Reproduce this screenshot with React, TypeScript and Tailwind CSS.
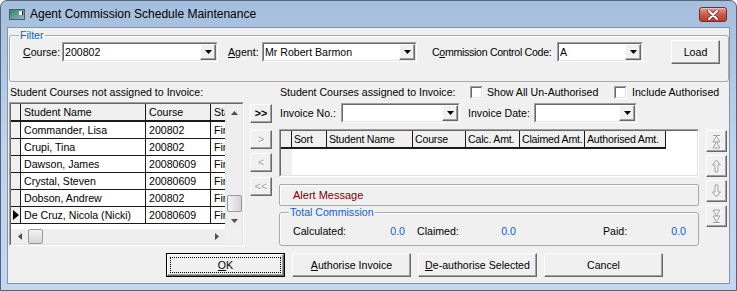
import React from "react";

const raised =
  "border border-t-white border-l-white border-b-[#696969] border-r-[#696969] shadow-[inset_-1px_-1px_0_#a0a0a0] bg-[#f0f0f0]";
const dim = "text-[#a0a0a0] [text-shadow:1px_1px_0_#fff]";

function Sunken({ className, children }: { className: string; children?: React.ReactNode }) {
  return (
    <div className={`${className} flex shrink-0 border border-t-[#a0a0a0] border-l-[#a0a0a0] border-b-white border-r-white`}>
      <div className="flex min-w-0 flex-1 flex-col border border-t-[#696969] border-l-[#696969] border-b-[#e3e3e3] border-r-[#e3e3e3]">
        {children}
      </div>
    </div>
  );
}

function DropBtn() {
  return (
    <div className={`${raised} flex w-[16px] items-center justify-center`}>
      <svg width="7" height="4" viewBox="0 0 7 4">
        <polygon points="0,0 7,0 3.5,4" fill="#000" />
      </svg>
    </div>
  );
}

function Combo({ className, value }: { className: string; value?: string }) {
  return (
    <Sunken className={`${className} h-[20px]`}>
      <div className="flex flex-1 bg-white">
        <span className="flex-1 pl-[1px] leading-[16px]">{value}</span>
        <DropBtn />
      </div>
    </Sunken>
  );
}

function Check() {
  return (
    <div className="h-[13px] w-[13px] shrink-0 border border-t-[#a0a0a0] border-l-[#a0a0a0] border-b-white border-r-white">
      <div className="h-full w-full border border-t-[#696969] border-l-[#696969] border-b-[#e3e3e3] border-r-[#e3e3e3] bg-white" />
    </div>
  );
}

function Tri({ dir }: { dir: "up" | "down" | "left" | "right" }) {
  const pts = {
    up: "0,4 7,4 3.5,0",
    down: "0,0 7,0 3.5,4",
    left: "4,0 4,7 0,3.5",
    right: "0,0 0,7 4,3.5",
  }[dir];
  const w = dir === "up" || dir === "down" ? 7 : 4;
  const h = dir === "up" || dir === "down" ? 4 : 7;
  return (
    <svg width={w} height={h} viewBox={`0 0 ${w} ${h}`}>
      <polygon points={pts} fill="#4d4d4d" />
    </svg>
  );
}

const students = [
  ["Commander, Lisa", "200802"],
  ["Crupi, Tina", "200802"],
  ["Dawson, James", "20080609"],
  ["Crystal, Steven", "20080609"],
  ["Dobson, Andrew", "200802"],
  ["De Cruz, Nicola (Nicki)", "20080609"],
];

function LeftGrid() {
  return (
    <Sunken className="h-[144px] w-[235px]">
      <div className="flex flex-1 bg-white">
        <div className="flex w-[214px] flex-col">
          <div className="flex h-[18px] border-b-2 border-[#1a1a1a] bg-[#f0f0f0]">
            <div className="w-[10px] border-r border-[#1a1a1a]" />
            <div className="w-[125px] border-r border-[#1a1a1a] pl-[3px] leading-[16px]">Student Name</div>
            <div className="w-[65px] border-r border-[#1a1a1a] pl-[3px] leading-[16px]">Course</div>
            <div className="w-[14px] overflow-hidden whitespace-nowrap pl-[3px] leading-[16px]">Status</div>
          </div>
          {students.map(([name, course], i) => (
            <div key={name} className="flex h-[17px] border-b border-[#1a1a1a]">
              <div className="flex w-[10px] items-center border-r border-[#1a1a1a] bg-[#f0f0f0]">
                {i === 5 ? (
                  <svg width="6" height="10" viewBox="0 0 6 10" className="ml-[2px]">
                    <polygon points="0,0 6,5 0,10" fill="#000" />
                  </svg>
                ) : null}
              </div>
              <div className="w-[125px] overflow-hidden whitespace-nowrap border-r border-[#1a1a1a] pl-[3px] leading-[16px]">{name}</div>
              <div className="w-[65px] border-r border-[#1a1a1a] pl-[3px] leading-[16px]">{course}</div>
              <div className="w-[14px] overflow-hidden whitespace-nowrap pl-[3px] leading-[16px]">First</div>
            </div>
          ))}
        </div>
        <div className="flex w-[17px] flex-col border-l border-[#e6e6e6] bg-[#eeeeee]">
          <div className="flex h-[17px] items-center justify-center">
            <Tri dir="up" />
          </div>
          <div className="flex-1">
            <div className="ml-[1px] mt-[74px] h-[17px] w-[15px] rounded-[2px] border border-[#9a9a9a] bg-gradient-to-r from-[#f4f4f4] to-[#d4d4d4]" />
          </div>
          <div className="flex h-[17px] items-center justify-center">
            <Tri dir="down" />
          </div>
        </div>
      </div>
      <div className="flex h-[17px] bg-[#eeeeee]">
        <div className="flex w-[214px] items-center">
          <div className="flex w-[17px] justify-center">
            <Tri dir="left" />
          </div>
          <div className="h-[15px] w-[15px] rounded-[2px] border border-[#9a9a9a] bg-gradient-to-b from-[#f4f4f4] to-[#d4d4d4]" />
          <div className="flex-1" />
          <div className="flex w-[17px] justify-center">
            <Tri dir="right" />
          </div>
        </div>
        <div className="w-[17px] bg-[#f0f0f0]" />
      </div>
    </Sunken>
  );
}

const invCols: [string, string][] = [
  ["Sort", "w-[35px]"],
  ["Student Name", "w-[86px]"],
  ["Course", "w-[53px]"],
  ["Calc. Amt.", "w-[54px]"],
  ["Claimed Amt.", "w-[65px]"],
  ["Authorised Amt.", "w-[81px]"],
];

function InvoiceGrid() {
  return (
    <Sunken className="h-[48px] w-[420px]">
      <div className="flex flex-1 bg-white">
        <div className="w-[11px] bg-[#f0f0f0]">
          <div className="h-[18px] border-b-2 border-r border-[#1a1a1a]" />
        </div>
        <div className="flex-1">
          <div className="flex h-[18px]">
            {invCols.map(([t, w]) => (
              <div
                key={t}
                className={`${w} overflow-hidden whitespace-nowrap border-b-2 border-r border-[#1a1a1a] bg-[#f0f0f0] pl-[2px] leading-[16px] tracking-[-0.2px]`}
              >
                {t}
              </div>
            ))}
          </div>
        </div>
      </div>
    </Sunken>
  );
}

function IconBtn({ kind }: { kind: "top" | "up" | "down" | "bottom" }) {
  const paths = {
    top: "M1 1.5 H8 M4.5 2 L8 8 H1 Z M4.5 8 L8 14 H1 Z",
    up: "M4.5 1 L8.5 6 H6 V13 H3 V6 H0.5 Z",
    down: "M4.5 13 L8.5 8 H6 V1 H3 V8 H0.5 Z",
    bottom: "M1 13.5 H8 M4.5 13 L8 7 H1 Z M4.5 7 L8 1 H1 Z",
  }[kind];
  return (
    <div className={`${raised} flex h-[22px] w-[21px] items-center justify-center`}>
      <svg width="10" height="15" viewBox="0 0 10 15">
        <path d={paths} transform="translate(1,1)" fill="none" stroke="#fff" strokeWidth="1" />
        <path d={paths} fill="none" stroke="#a0a0a0" strokeWidth="1" />
      </svg>
    </div>
  );
}

function Btn({ children, def }: { children: React.ReactNode; def?: boolean }) {
  if (def) {
    return (
      <div className="h-[24px] w-[119px] border border-black">
        <div className={`${raised} flex h-full w-full items-center justify-center p-[2px]`}>
          <div className="flex h-full w-full items-center justify-center border border-dotted border-black">{children}</div>
        </div>
      </div>
    );
  }
  return <div className={`${raised} flex h-[24px] w-[119px] items-center justify-center`}>{children}</div>;
}

function Group({ className, title, children }: { className: string; title: string; children?: React.ReactNode }) {
  return (
    <div className={`${className} relative rounded-[3px] border border-[#a9a9a9] shadow-[inset_1px_1px_0_#fff]`}>
      <span className="absolute left-[9px] top-[-7px] bg-[#f0f0f0] px-[1px] leading-[13px] text-[#0a62d0]">{title}</span>
      {children}
    </div>
  );
}

export default function App() {
  return (
    <div className="h-[291px] w-[737px] overflow-hidden font-['Liberation_Sans',Arial,sans-serif] text-[10.6px] leading-[13px] text-black">
      <div className="flex h-full w-full flex-col rounded-t-[7px] border border-[#52647a] bg-gradient-to-b from-[#a4bedd] via-[#bed3ec] to-[#c3d8ef]">
        <div className="flex h-[26px] items-center pl-[8px] pr-[9px]">
          <svg width="16" height="11" viewBox="0 0 16 11" className="mt-[1px]">
            <defs>
              <linearGradient id="ic" x1="0" x2="1" y1="0" y2="1">
                <stop offset="0" stopColor="#2f7f6a" />
                <stop offset="1" stopColor="#8fb7d8" />
              </linearGradient>
            </defs>
            <rect x="0.5" y="0.5" width="15" height="10" fill="url(#ic)" stroke="#5a5a5a" />
            <rect x="10" y="2" width="4" height="4" fill="#fff" />
            <rect x="13" y="2" width="1" height="4" fill="#222" />
          </svg>
          <span className="ml-[5px] mt-[1px] text-[12px] text-black">Agent Commission Schedule Maintenance</span>
          <div className="flex-1" />
          <div className="mt-[1px] flex h-[15px] w-[28px] items-center justify-center rounded-[3px] border border-[#7b2a22] bg-gradient-to-b from-[#e39a8e] via-[#cc5a4c] to-[#b83b2d] shadow-[inset_0_1px_0_#f2bdb4]">
            <svg width="12" height="10" viewBox="0 0 12 10">
              <path d="M2 1 L10 9 M10 1 L2 9" stroke="#6a2a24" strokeWidth="3.4" strokeLinecap="round" />
              <path d="M2 1 L10 9 M10 1 L2 9" stroke="#fff" strokeWidth="2" strokeLinecap="round" />
            </svg>
          </div>
        </div>
        <div className="flex-1 px-[6px] pb-[6px]">
          <div className="h-[257px] w-[723px] border border-[#7e95b0] bg-[#f0f0f0]">
            <Group className="ml-[1px] mt-[7px] h-[47px] w-[720px]" title="Filter">
              <div className="mt-[6px] flex h-[20px] items-center whitespace-nowrap">
                <span className="ml-[13px] w-[39px] shrink-0">
                  <u>C</u>ourse:
                </span>
                <Combo className="w-[156px]" value="200802" />
                <span className="ml-[10px] w-[34px] shrink-0">
                  <u>A</u>gent:
                </span>
                <Combo className="w-[155px]" value="Mr Robert Barmon" />
                <span className="ml-[15px] w-[125px] shrink-0 tracking-[-0.3px]">
                  C<u>o</u>mmission Control Code:
                </span>
                <Combo className="w-[86px]" value="A" />
                <div className={`${raised} ml-[28px] flex h-[24px] w-[49px] shrink-0 items-center justify-center`}>Load</div>
              </div>
            </Group>

            <div className="mt-[3px] flex h-[161px] items-start">
              <div className="ml-[1px] flex w-[235px] shrink-0 flex-col">
                <div className="mt-[1px] h-[13px] whitespace-nowrap pl-[1px]">Student Courses not assigned to Invoice:</div>
                <div className="mt-[3px]">
                  <LeftGrid />
                </div>
              </div>

              <div className="ml-[6px] flex w-[22px] shrink-0 flex-col pt-[19px]">
                <div className={`${raised} flex h-[19px] items-center justify-center font-bold leading-none`}>&gt;&gt;</div>
                <div className={`${raised} ${dim} mt-[7px] flex h-[19px] items-center justify-center`}>&gt;</div>
                <div className={`${raised} ${dim} mt-[4px] flex h-[19px] items-center justify-center`}>&lt;</div>
                <div className={`${raised} ${dim} mt-[5px] flex h-[19px] items-center justify-center`}>&lt;&lt;</div>
              </div>

              <div className="ml-[7px] flex w-[420px] shrink-0 flex-col">
                <div className="mt-[1px] flex h-[13px] items-center whitespace-nowrap">
                  <span className="w-[191px] shrink-0 pl-[1px]">Student Courses assigned to Invoice:</span>
                  <Check />
                  <span className="ml-[4px] w-[127px] shrink-0">Show All Un-Authorised</span>
                  <Check />
                  <span className="ml-[5px] shrink-0">Include Authorised</span>
                </div>
                <div className="mt-[4px] flex h-[20px] items-center whitespace-nowrap">
                  <span className="w-[62px] shrink-0 pl-[1px]">Invoice No.:</span>
                  <Combo className="w-[119px]" />
                  <span className="ml-[8px] w-[66px] shrink-0">Invoice Date:</span>
                  <Combo className="w-[103px]" />
                </div>
                <div className="mt-[6px]">
                  <InvoiceGrid />
                </div>
                <div className="mt-[7px] flex h-[22px] items-center rounded-[2px] border border-[#a9a9a9] pl-[13px] text-[11px] text-[#800000] shadow-[inset_1px_1px_0_#fff]">
                  Alert Message
                </div>
                <Group className="mt-[6px] h-[34px] w-[420px]" title="Total Commission">
                  <div className="mt-[12px] flex h-[13px] pl-[13px]">
                    <div className="flex w-[112px] justify-between">
                      <span>Calculated:</span>
                      <span className="text-[#0a62d0]">0.0</span>
                    </div>
                    <div className="ml-[12px] flex w-[99px] justify-between">
                      <span>Claimed:</span>
                      <span className="text-[#0a62d0]">0.0</span>
                    </div>
                    <div className="ml-[87px] flex w-[83px] justify-between">
                      <span>Paid:</span>
                      <span className="text-[#0a62d0]">0.0</span>
                    </div>
                  </div>
                </Group>
              </div>

              <div className="ml-[7px] flex w-[21px] shrink-0 flex-col gap-[3px] pt-[45px]">
                <IconBtn kind="top" />
                <IconBtn kind="up" />
                <IconBtn kind="down" />
                <IconBtn kind="bottom" />
              </div>
            </div>

            <div className="ml-[158px] mt-[7px] flex gap-[7px]">
              <Btn def>
                <u>O</u>K
              </Btn>
              <Btn>
                <u>A</u>uthorise Invoice
              </Btn>
              <Btn>
                <u>D</u>e-authorise Selected
              </Btn>
              <Btn>Cancel</Btn>
            </div>
          </div>
        </div>
      </div>
    </div>
  );
}
